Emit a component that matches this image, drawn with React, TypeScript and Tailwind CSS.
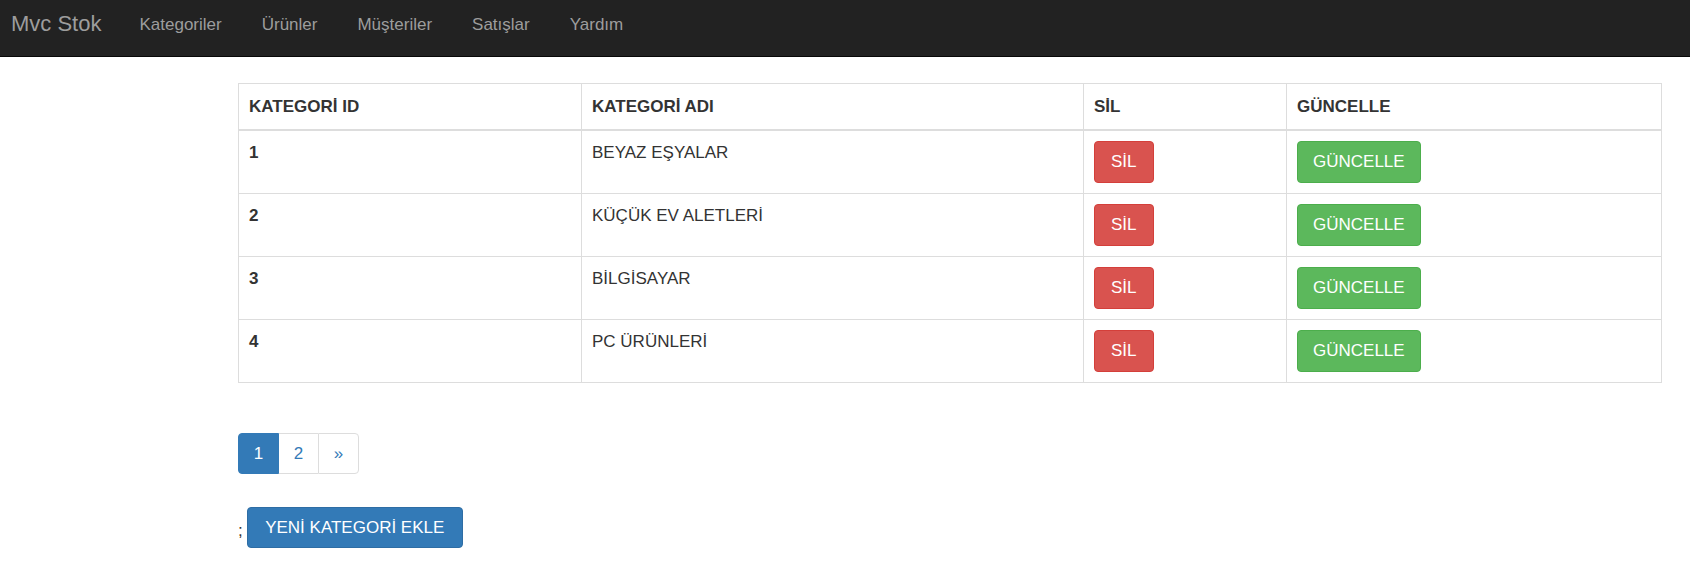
import React from "react";

const navLinks = ["Kategoriler", "Ürünler", "Müşteriler", "Satışlar", "Yardım"];

const categories = [
  { id: 1, name: "BEYAZ EŞYALAR" },
  { id: 2, name: "KÜÇÜK EV ALETLERİ" },
  { id: 3, name: "BİLGİSAYAR" },
  { id: 4, name: "PC ÜRÜNLERİ" },
];

const App: React.FC = () => {
  return (
    <div className="min-h-[586px] bg-white text-[#333] text-[17px] font-['Liberation_Sans',Arial,sans-serif]">
      <nav className="h-[57px] bg-[#222] border-b border-[#080808] flex items-start">
        <a className="ml-[11px] mt-[9px] text-[22px] leading-[30px] text-[#9d9d9d]">Mvc Stok</a>
        <ul className="flex ml-[38px] mt-[12px]">
          {navLinks.map((l, i) => (
            <li
              key={l}
              className={
                i === 0
                  ? "text-[#9d9d9d] leading-[25px]"
                  : "text-[#9d9d9d] leading-[25px] ml-[40px]"
              }
            >
              {l}
            </li>
          ))}
        </ul>
      </nav>

      <div className="ml-[238px] w-[1424px] pt-[26px]">
        <table className="w-full table-fixed border-collapse border border-[#ddd]">
          <colgroup>
            <col className="w-[343px]" />
            <col className="w-[502px]" />
            <col className="w-[203px]" />
            <col />
          </colgroup>
          <thead>
            <tr>
              {["KATEGORİ ID", "KATEGORİ ADI", "SİL", "GÜNCELLE"].map((h) => (
                <th
                  key={h}
                  className="text-left font-bold px-[10px] pt-[11px] pb-[10px] leading-[24px] border border-[#ddd] border-b-2"
                >
                  {h}
                </th>
              ))}
            </tr>
          </thead>
          <tbody>
            {categories.map((c) => (
              <tr key={c.id}>
                <td className="align-top font-bold px-[10px] pt-[10px] pb-[10px] leading-[24px] border border-[#ddd]">
                  {c.id}
                </td>
                <td className="align-top px-[10px] pt-[10px] pb-[10px] leading-[24px] border border-[#ddd]">
                  {c.name}
                </td>
                <td className="align-top px-[10px] pt-[10px] pb-[10px] border border-[#ddd]">
                  <button
                    type="button"
                    className="h-[42px] px-[16px] rounded-[4px] bg-[#d9534f] border border-[#d43f3a] text-white leading-[24px]"
                  >
                    SİL
                  </button>
                </td>
                <td className="align-top px-[10px] pt-[10px] pb-[10px] border border-[#ddd]">
                  <button
                    type="button"
                    className="h-[42px] px-[15px] rounded-[4px] bg-[#5cb85c] border border-[#4cae4c] text-white leading-[24px]"
                  >
                    GÜNCELLE
                  </button>
                </td>
              </tr>
            ))}
          </tbody>
        </table>

        <ul className="flex mt-[50px]">
          <li className="w-[41px] h-[41px] flex items-center justify-center bg-[#337ab7] border border-[#337ab7] text-white rounded-l-[4px]">
            1
          </li>
          <li className="w-[39px] h-[41px] flex items-center justify-center border-y border-[#ddd] text-[#337ab7]">
            2
          </li>
          <li className="w-[41px] h-[41px] flex items-center justify-center border border-[#ddd] text-[#337ab7] rounded-r-[4px]">
            »
          </li>
        </ul>

        <div className="mt-[33px] flex items-center">
          <span className="mt-[6px]">;</span>
          <button
            type="button"
            className="ml-[4px] h-[41px] w-[216px] rounded-[4px] bg-[#337ab7] border border-[#2e6da4] text-white leading-[24px]"
          >
            YENİ KATEGORİ EKLE
          </button>
        </div>
      </div>
    </div>
  );
};

export default App;
